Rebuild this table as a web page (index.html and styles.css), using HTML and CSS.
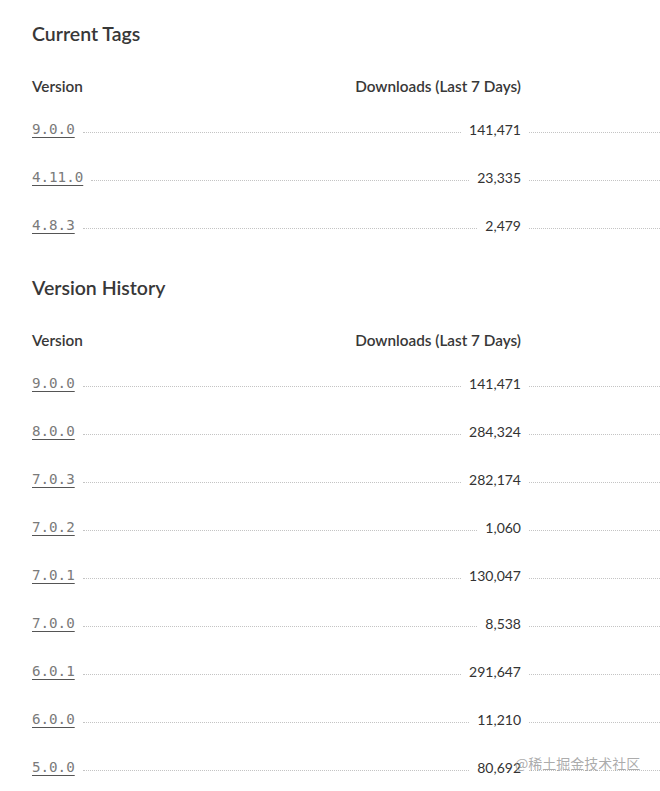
FILE: index.html
```html
<!DOCTYPE html>
<html lang="en">
<head>
<meta charset="utf-8">
<title>Versions</title>
<link rel="stylesheet" href="styles.css">
</head>
<body>
<main class="page">
  <section class="section section-tags">
    <h2 class="title">Current Tags</h2>
    <div class="head-row">
      <div class="left">
        <span class="head-version">Version</span>
        <span class="head-downloads">Downloads (Last 7 Days)</span>
      </div>
    </div>
    <div class="row"><div class="left"><a class="ver" href="#">9.0.0</a><span class="dots"></span><span class="num">141,471</span></div><span class="dots trail"></span></div>
    <div class="row"><div class="left"><a class="ver" href="#">4.11.0</a><span class="dots"></span><span class="num">23,335</span></div><span class="dots trail"></span></div>
    <div class="row"><div class="left"><a class="ver" href="#">4.8.3</a><span class="dots"></span><span class="num">2,479</span></div><span class="dots trail"></span></div>
  </section>
  <section class="section section-history">
    <h2 class="title">Version History</h2>
    <div class="head-row">
      <div class="left">
        <span class="head-version">Version</span>
        <span class="head-downloads">Downloads (Last 7 Days)</span>
      </div>
    </div>
    <div class="row"><div class="left"><a class="ver" href="#">9.0.0</a><span class="dots"></span><span class="num">141,471</span></div><span class="dots trail"></span></div>
    <div class="row"><div class="left"><a class="ver" href="#">8.0.0</a><span class="dots"></span><span class="num">284,324</span></div><span class="dots trail"></span></div>
    <div class="row"><div class="left"><a class="ver" href="#">7.0.3</a><span class="dots"></span><span class="num">282,174</span></div><span class="dots trail"></span></div>
    <div class="row"><div class="left"><a class="ver" href="#">7.0.2</a><span class="dots"></span><span class="num">1,060</span></div><span class="dots trail"></span></div>
    <div class="row"><div class="left"><a class="ver" href="#">7.0.1</a><span class="dots"></span><span class="num">130,047</span></div><span class="dots trail"></span></div>
    <div class="row"><div class="left"><a class="ver" href="#">7.0.0</a><span class="dots"></span><span class="num">8,538</span></div><span class="dots trail"></span></div>
    <div class="row"><div class="left"><a class="ver" href="#">6.0.1</a><span class="dots"></span><span class="num">291,647</span></div><span class="dots trail"></span></div>
    <div class="row"><div class="left"><a class="ver" href="#">6.0.0</a><span class="dots"></span><span class="num">11,210</span></div><span class="dots trail"></span></div>
    <div class="row"><div class="left"><a class="ver" href="#">5.0.0</a><span class="dots"></span><span class="num">80,692</span></div><span class="dots trail"></span></div>
  </section>
</main>
<div class="watermark">@稀土掘金技术社区</div>
</body>
</html>
```

FILE: styles.css
```css
html, body {
  margin: 0;
  padding: 0;
  background: #ffffff;
  overflow: hidden;
}

body {
  font-family: Lato, "Noto Sans", sans-serif;
  color: #333333;
}

.page {
  padding: 22px 0 0 32px;
}

.section-history {
  margin-top: 27px;
}

.title {
  margin: 0 0 28px 0;
  font-size: 19.5px;
  line-height: 24px;
  font-weight: 600;
  color: #383838;
}

.head-row {
  display: flex;
  height: 24px;
  align-items: center;
  margin-bottom: 7px;
}

.left {
  width: 489px;
  flex: 0 0 489px;
  display: flex;
  align-items: center;
}

.head-version,
.head-downloads {
  font-size: 15.3px;
  font-weight: 600;
  color: #383838;
}

.head-version {
  flex: 1;
}

.row {
  display: flex;
  align-items: center;
  height: 48px;
}

.ver {
  font-family: "DejaVu Sans Mono", monospace;
  font-size: 14.2px;
  color: #7a7a7a;
  text-decoration: underline;
  text-decoration-color: #555555;
  text-underline-offset: 3px;
}

.dots {
  flex: 1;
  height: 0;
  border-bottom: 1px dotted #c4c4c4;
  margin: 7px 8px 0 8px;
}

.dots.trail {
  margin-right: 0;
}

.num {
  font-size: 14px;
  color: #333333;
}

.watermark {
  position: absolute;
  left: 515px;
  top: 753px;
  font-family: "Noto Sans CJK SC", sans-serif;
  font-size: 14px;
  color: rgba(150, 150, 150, 0.8);
  white-space: nowrap;
}
```
